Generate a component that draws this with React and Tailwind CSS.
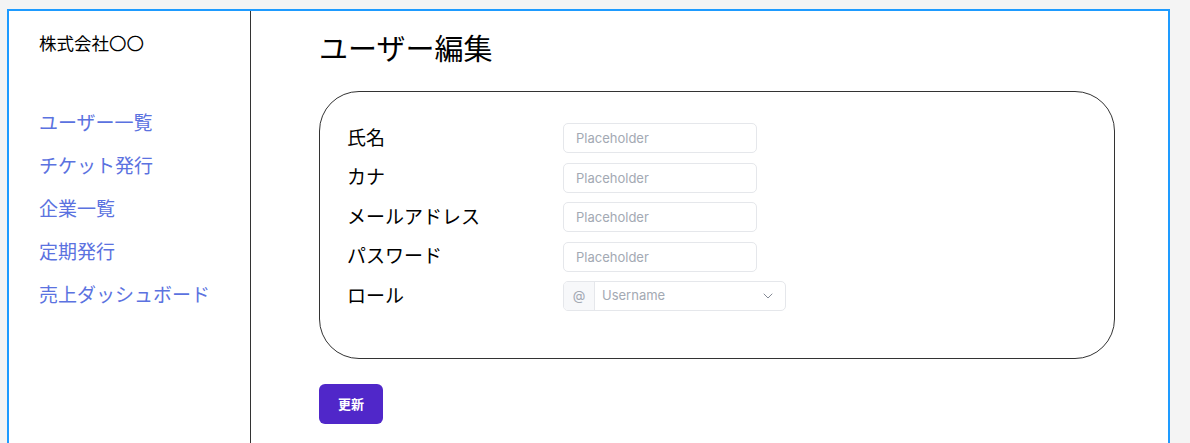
import { ChevronDown } from "lucide-react";

const navItems = ["ユーザー一覧", "チケット発行", "企業一覧", "定期発行", "売上ダッシュボード"];

const fields = ["氏名", "カナ", "メールアドレス", "パスワード"];

const jp = { fontFamily: '"Noto Sans CJK JP", "Noto Sans", sans-serif' };
const latin = { fontFamily: 'Inter, "Noto Sans CJK JP", sans-serif' };

export default function App() {
  return (
    <div className="h-[443px] overflow-hidden bg-[#f4f4f4] pl-[7px] pr-[20px] pt-[9px]" style={jp}>
      <div className="flex h-[460px] border-2 border-[#1e9bff] bg-white">
        <aside className="w-[242px] shrink-0 border-r border-[#333] pl-[30px] pt-[19px]">
          <div className="text-[17.5px] leading-[26px] text-black">株式会社〇〇</div>
          <nav className="mt-[52px] flex flex-col gap-[16px]">
            {navItems.map((item) => (
              <a key={item} href="#" className="text-[19px] leading-[27px] text-[#5b72e0]">
                {item}
              </a>
            ))}
          </nav>
        </aside>

        <main className="flex-1 pl-[68px] pt-[17px]">
          <h1 className="text-[29px] leading-[38px] text-black">ユーザー編集</h1>

          <div className="mt-[25px] w-[796px] rounded-[40px] border border-[#333] pb-[47px] pl-[27px] pt-[31px]">
            <div className="flex flex-col gap-[9.5px]">
              {fields.map((label) => (
                <div key={label} className="flex items-center">
                  <label className="-mt-[3px] w-[216px] text-[19px] leading-[26px] text-black">{label}</label>
                  <input
                    placeholder="Placeholder"
                    className="h-[30px] w-[194px] rounded-[5px] border border-[#e5e7eb] px-[12px] text-[13px] placeholder:text-[#a3a9b3] focus:outline-none"
                    style={latin}
                  />
                </div>
              ))}
              <div className="flex items-center">
                <label className="-mt-[3px] w-[216px] text-[19px] leading-[26px] text-black">ロール</label>
                <div className="flex h-[30px] w-[223px] overflow-hidden rounded-[5px] border border-[#e5e7eb]" style={latin}>
                  <span className="flex w-[31px] items-center justify-center border-r border-[#e5e7eb] bg-[#f7f8fa] text-[13px] text-[#a3a9b3]">@</span>
                  <div className="flex flex-1 items-center justify-between pl-[7px] pr-[9px]">
                    <span className="text-[13px] text-[#a3a9b3]">Username</span>
                    <ChevronDown className="h-[16px] w-[16px] text-[#6b7280]" strokeWidth={1.25} />
                  </div>
                </div>
              </div>
            </div>
          </div>

          <button className="mt-[25px] h-[40px] w-[64px] rounded-[6px] bg-[#5027c9] text-[13px] font-bold text-white">
            更新
          </button>
        </main>
      </div>
    </div>
  );
}
